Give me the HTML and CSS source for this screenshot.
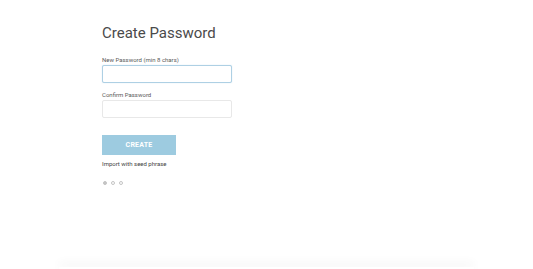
FILE: index.html
```html
<!DOCTYPE html>
<html lang="en">
<head>
    <meta charset="UTF-8">
    <title>Create Password</title>
    <link rel="stylesheet" href="styles.css">
</head>
<body>
    <div class="page">
        <div class="create-password">
            <h1 class="title">Create Password</h1>

            <div class="field">
                <label class="field-label" for="pw">New Password (min 8 chars)</label>
                <input class="field-input focused" id="pw" type="password">
            </div>

            <div class="field">
                <label class="field-label" for="pw2">Confirm Password</label>
                <input class="field-input" id="pw2" type="password">
            </div>

            <button class="create-btn" disabled>CREATE</button>

            <a class="import-link" href="#">Import with seed phrase</a>

            <div class="dots">
                <span class="dot active"></span>
                <span class="dot"></span>
                <span class="dot"></span>
            </div>
        </div>

        <!-- karta pod spodem, widać tylko cień -->
        <div class="bottom-card"></div>
    </div>
</body>
</html>
```

FILE: styles.css
```css
* {
    margin: 0;
    padding: 0;
    box-sizing: border-box;
}

body {
    font-family: Roboto, sans-serif;
    color: #333;
    background: #fff;
    overflow: hidden;
}

.page {
    height: 269px;
    display: flex;
    flex-direction: column;
    align-items: center;
}

.create-password {
    width: 533px;
    padding: 24px 0 0 102px;
    display: flex;
    flex-direction: column;
    align-items: flex-start;
}

.title {
    font-size: 15px;
    font-weight: 400;
    color: #4a4a4a;
    line-height: 18px;
    margin-bottom: 14px;
}

.field {
    display: flex;
    flex-direction: column;
    margin-bottom: 8px;
}

.field-label {
    font-size: 6px;
    color: #5a5a5a;
    line-height: 8px;
    margin-bottom: 1px;
}

.field-input {
    width: 130px;
    height: 18px;
    border: 1px solid #e8e8e8;
    border-radius: 2px;
    background: #fff;
    outline: none;
}

.field-input.focused {
    border-color: #aed0e4;
    box-shadow: 0 0 1px rgba(120, 180, 220, 0.5);
}

.create-btn {
    margin-top: 9px;
    width: 74px;
    height: 20px;
    border: none;
    background: #9dcbe0;
    color: #fff;
    font-family: Roboto, sans-serif;
    font-size: 7px;
    font-weight: 700;
    letter-spacing: 0.2px;
}

.import-link {
    margin-top: 5px;
    font-size: 6px;
    color: #444;
    text-decoration: none;
    line-height: 8px;
}

.dots {
    margin-top: 13px;
    margin-left: 1px;
    display: flex;
    gap: 4px;
}

.dot {
    width: 4px;
    height: 4px;
    border-radius: 50%;
    border: 1px solid #c4c4c4;
}

.dot.active {
    background: #c4c4c4;
}

.bottom-card {
    margin-top: auto;
    width: 415px;
    height: 2px;
    flex-shrink: 0;
    background: #fff;
    box-shadow: 0 -3px 10px rgba(0, 0, 0, 0.12);
}
```
